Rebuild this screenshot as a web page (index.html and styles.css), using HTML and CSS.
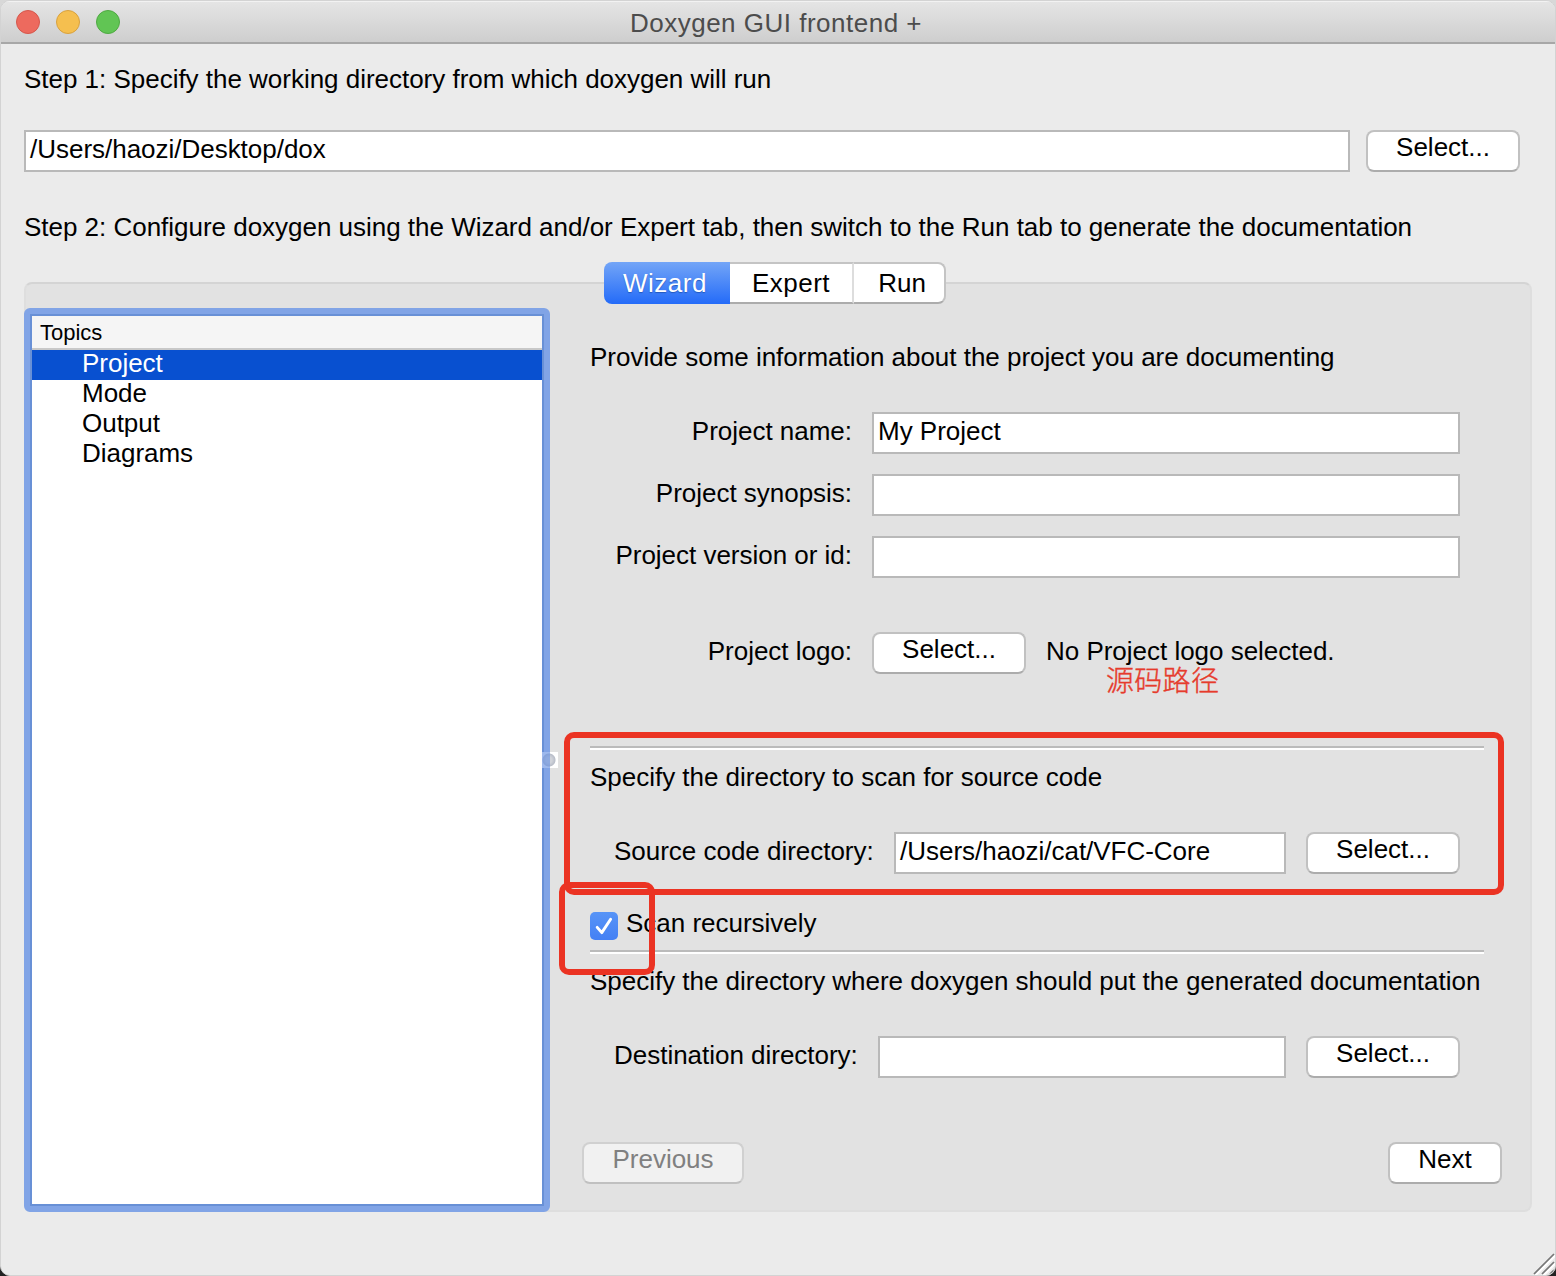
FILE: index.html
```html
<!DOCTYPE html>
<html lang="en">
<head>
<meta charset="utf-8">
<title>Doxygen GUI frontend +</title>
<link rel="stylesheet" href="styles.css">
</head>
<body>
<main class="window">
  <header class="titlebar">
    <div class="lights"><span class="light close"></span><span class="light minimize"></span><span class="light maximize"></span></div>
    <h1 class="title">Doxygen GUI frontend +</h1>
  </header>
  <section class="setup">
    <p class="text step-one">Step 1: Specify the working directory from which doxygen will run</p>
    <div class="row working-dir">
      <div class="field grow">/Users/haozi/Desktop/dox</div>
      <button class="button select">Select...</button>
    </div>
    <p class="text step-two">Step 2: Configure doxygen using the Wizard and/or Expert tab, then switch to the Run tab to generate the documentation</p>
  </section>
  <nav class="tabs">
    <button class="tab tab-wizard active">Wizard</button><button class="tab tab-expert">Expert</button><button class="tab tab-run">Run</button>
  </nav>
  <section class="panel">
    <aside class="tree">
      <div class="tree-head">Topics</div>
      <ul class="topics">
        <li class="topic selected">Project</li>
        <li class="topic">Mode</li>
        <li class="topic">Output</li>
        <li class="topic">Diagrams</li>
      </ul>
      <span class="splitter"></span>
    </aside>
    <div class="page">
      <p class="text intro">Provide some information about the project you are documenting</p>
      <div class="form">
        <label class="label">Project name:</label><div class="field">My Project</div>
        <label class="label">Project synopsis:</label><div class="field"></div>
        <label class="label">Project version or id:</label><div class="field"></div>
      </div>
      <div class="form logo-form">
        <label class="label">Project logo:</label>
        <div class="row">
          <button class="button select">Select...</button>
          <span class="label logo-state">No Project logo selected.</span>
        </div>
      </div>
      <hr class="rule">
      <p class="text source-heading">Specify the directory to scan for source code</p>
      <div class="row dir-row">
        <label class="label source-label">Source code directory:</label>
        <div class="field grow">/Users/haozi/cat/VFC-Core</div>
        <button class="button select">Select...</button>
      </div>
      <div class="check-row">
        <svg class="checkbox" viewBox="0 0 28 28"><defs><linearGradient id="tick-fill" x2="0" y2="1"><stop stop-color="#5794f7"/><stop offset="1" stop-color="#4480f4"/></linearGradient></defs><rect width="28" height="28" rx="5" fill="url(#tick-fill)"/><path d="M7.2 15.4l4.6 5.2L20.6 7.3" fill="none" stroke="#fff" stroke-width="2.9" stroke-linecap="round" stroke-linejoin="round"/></svg>
        <span class="label">Scan recursively</span>
      </div>
      <hr class="rule">
      <p class="text dest-heading">Specify the directory where doxygen should put the generated documentation</p>
      <div class="row dir-row">
        <label class="label dest-label">Destination directory:</label>
        <div class="field grow"></div>
        <button class="button select">Select...</button>
      </div>
      <footer class="wizard-nav">
        <button class="button previous" disabled>Previous</button>
        <button class="button next">Next</button>
      </footer>
    </div>
  </section>
  <svg class="grip" viewBox="0 0 24 24"><path d="M2 22L22 2M10 22L22 10M18 22L22 18" stroke="#fff" stroke-width="2" transform="translate(1.4 1.4)"/><path d="M2 22L22 2M10 22L22 10M18 22L22 18" stroke="#777" stroke-width="1.7"/></svg>
  <div class="mark mark-source"></div>
  <div class="mark mark-scan"></div>
  <div class="note">源码路径</div>
</main>
</body>
</html>
```

FILE: styles.css
```css
* { box-sizing: border-box; }

body {
  margin: 0;
  background: linear-gradient(#d8d8d8 50%, #222 50%);
  font-family: "Liberation Sans", Arial, sans-serif;
  font-size: 26px;
  line-height: 30px;
  letter-spacing: -0.02px;
  color: #000;
}

.window {
  position: relative;
  width: 1556px;
  height: 1276px;
  overflow: hidden;
  background: #ebebeb;
  border: 1px solid #d3d3d3;
  border-radius: 10px;
}

.titlebar {
  display: grid;
  grid-template-columns: 1fr auto 1fr;
  height: 43px;
  background: linear-gradient(#e5e5e5, #cecece);
  border-bottom: 2px solid #a7a7a7;
  box-shadow: inset 0 1px #f2f2f2;
}

.lights { display: flex; gap: 16px; padding: 9px 0 0 15px; }
.light { width: 24px; height: 24px; border-radius: 50%; border: 1px solid; }
.close { background: #ed6a5e; border-color: #d5574c; }
.minimize { background: #f5bf4f; border-color: #d8a13e; }
.maximize { background: #61c554; border-color: #4fa942; }

.title {
  margin: 0;
  padding: 7px 4px 0 0;
  font-size: 26px;
  font-weight: 400;
  letter-spacing: 0.5px;
  color: #4c4c4c;
}

.setup { padding: 20px 35px 0 23px; }
.text { margin: 0; white-space: nowrap; }
.row { display: flex; }
.grow { flex: 1; }
.working-dir { margin: 36px 0 40px; gap: 16px; }

.field {
  height: 42px;
  padding: 2px 4px;
  background: #fff;
  border: 2px solid #b9b9b9;
  white-space: nowrap;
}

.button {
  height: 42px;
  padding: 0 0 8px;
  font: inherit;
  letter-spacing: inherit;
  color: #000;
  background: #fff;
  border: 2px solid #c1c1c1;
  border-bottom-color: #acacac;
  border-radius: 8px;
}

.select { width: 154px; }

.tabs {
  position: relative;
  z-index: 1;
  display: flex;
  width: 342px;
  height: 42px;
  margin: 20px 0 0 603px;
}

.tab {
  padding: 0;
  font: inherit;
  letter-spacing: 0.5px;
  background: #fff;
  border: 2px solid #c4c4c4;
  border-bottom-color: #acacac;
  border-left: 0;
}

.tab-wizard { width: 126px; }
.tab-expert { width: 124px; border-right-color: #ddd; }
.tab-run { width: 92px; padding-left: 6px; border-radius: 0 8px 8px 0; letter-spacing: 0; }

.tab.active {
  padding-right: 4px;
  color: #fff;
  text-shadow: 0 1px 1px #2459bd;
  background: linear-gradient(#73a5f7, #246bf8);
  border: 0;
  border-radius: 8px 0 0 8px;
}

.panel {
  display: flex;
  width: 1508px;
  height: 930px;
  margin: -22px 0 0 23px;
  padding-top: 24px;
  background: #e2e2e2;
  border: 2px solid #dedede;
  border-top-color: #d4d4d4;
  border-radius: 8px;
}

.tree {
  position: relative;
  width: 526px;
  height: 904px;
  margin-left: -2px;
  border: 6px solid #81a4e6;
  border-radius: 6px;
  background: #fff;
  box-shadow: inset 0 0 0 2px #6890d6;
  padding: 2px;
}

.tree-head {
  height: 34px;
  padding: 2px 8px;
  font-size: 22px;
  background: #f5f5f5;
  border-bottom: 2px solid #c8c8c8;
}

.topics { margin: 0; padding: 0; list-style: none; }
.topic { height: 30px; padding-left: 50px; line-height: 26px; }
.selected { color: #fff; background: #0850d0; }

.splitter {
  position: absolute;
  right: -14px;
  top: 438px;
  width: 16px;
  height: 16px;
  background: radial-gradient(circle at 7px 8px, #d0d3da 3px, #b9bec9 6px, #fff 7px);
}

.splitter::before {
  content: "";
  position: absolute;
  left: 0;
  top: 0;
  width: 8px;
  height: 16px;
  background: rgba(104, 148, 228, 0.65);
}

.page { width: 920px; padding: 34px 0 0 40px; }

.form {
  display: grid;
  grid-template-columns: 262px 588px;
  column-gap: 20px;
  row-gap: 20px;
  margin-top: 40px;
}

.label { padding-top: 4px; white-space: nowrap; }
.form > .label { text-align: right; }
.logo-form { margin-top: 54px; }
.logo-state { margin-left: 20px; }

.rule {
  width: 894px;
  height: 4px;
  margin: 0;
  border: 0;
  border-top: 2px solid #bbb;
  background: #fff;
}

.logo-form + .rule { margin-top: 72px; }
.source-heading, .dest-heading { margin-top: 12px; }

.dir-row { width: 870px; margin-top: 40px; padding-left: 24px; }
.dir-row .button { margin-left: 20px; }
.source-label { width: 280px; }
.dest-label { width: 264px; }

.check-row { display: flex; gap: 8px; height: 42px; margin: 30px 0 4px; }
.check-row .label { padding-top: 4px; }
.checkbox { width: 28px; height: 28px; margin-top: 8px; }

.wizard-nav {
  display: flex;
  justify-content: space-between;
  width: 920px;
  margin: 64px 0 0 -8px;
}

.previous { width: 162px; color: #808080; background: #f1f1f1; border-color: #d0d0d0; border-bottom-color: #c0c0c0; }
.next { width: 114px; }

.grip { position: absolute; right: -1px; bottom: -1px; width: 24px; height: 24px; }

.mark { position: absolute; border: 6px solid #eb3323; border-radius: 10px; }
.mark-source { left: 563px; top: 731px; width: 940px; height: 163px; }
.mark-scan { left: 558px; top: 881px; width: 96px; height: 93px; }

.note {
  position: absolute;
  left: 1105px;
  top: 665px;
  font-family: "Noto Sans CJK SC", sans-serif;
  font-size: 28px;
  font-weight: 300;
  line-height: 26px;
  letter-spacing: 0.3px;
  color: #e63b2c;
  -webkit-text-stroke: 0.4px #e63b2c;
}
```
